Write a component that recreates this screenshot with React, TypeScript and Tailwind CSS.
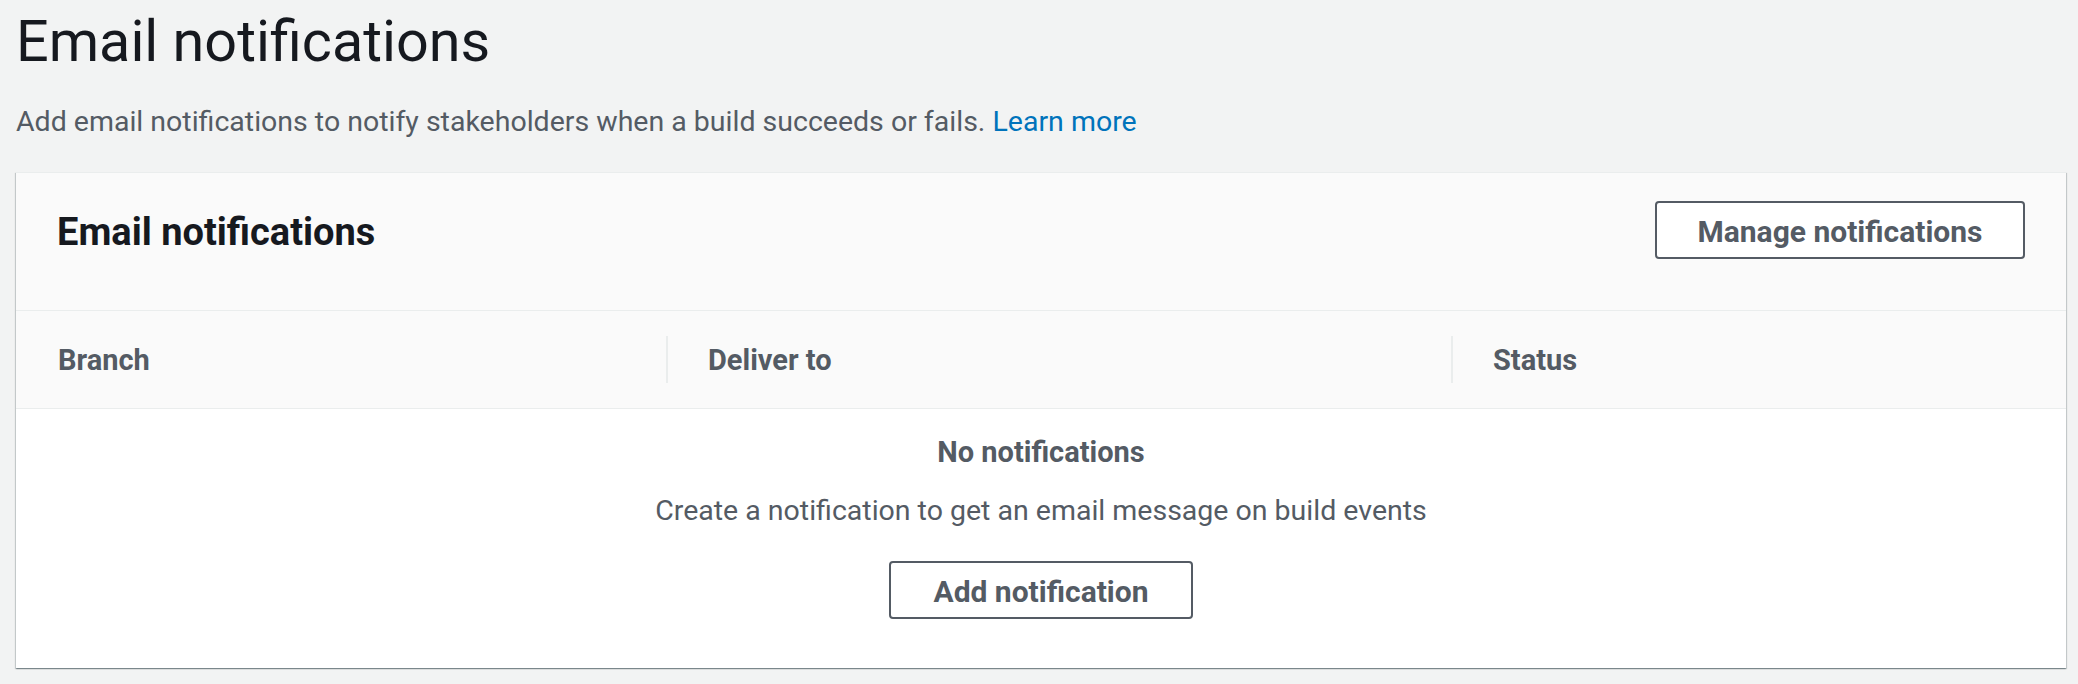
const font = { fontFamily: "Roboto, 'Liberation Sans', sans-serif" };

function OutlineButton({ label, width }: { label: string; width: string }) {
  return (
    <button
      className={`${width} h-[58px] rounded-[4px] border-2 border-[#545b64] bg-white pt-[3px] text-[30px] font-bold leading-none text-[#545b64]`}
    >
      {label}
    </button>
  );
}

function App() {
  const columns = ["Branch", "Deliver to", "Status"];

  return (
    <div className="h-[684px] w-full bg-[#f2f3f3] pl-[16px] pr-[12px]" style={font}>
      <h1 className="pt-[7px] text-[57.5px] font-normal leading-[70px] text-[#16191f]">Email notifications</h1>
      <p className="mt-[27px] text-[28.5px] leading-[36px] text-[#545b64]">
        Add email notifications to notify stakeholders when a build succeeds or fails.{" "}
        <a className="text-[#0073bb]" href="#">Learn more</a>
      </p>

      <div className="mt-[32px] border-t border-[#eaeded] bg-white shadow-[0_1px_1px_0_rgba(0,28,36,0.3),1px_1px_1px_0_rgba(0,28,36,0.15),-1px_1px_1px_0_rgba(0,28,36,0.15)]">
        <div className="h-[138px] border-b border-[#eaeded] bg-[#fafafa] px-[41px] pt-[28px]">
          <div className="flex h-[58px] items-center justify-between">
            <h2 className="pt-[4px] text-[38px] font-bold leading-[44px] text-[#16191f]">Email notifications</h2>
            <OutlineButton label="Manage notifications" width="w-[370px]" />
          </div>
        </div>

        <div className="grid h-[98px] grid-cols-[650px_785px_1fr] border-b border-[#eaeded] bg-[#fafafa]">
          {columns.map((col, i) => (
            <div key={col} className="flex items-center">
              {i > 0 && <div className="h-[47px] w-[2px] bg-[#eaeded]" />}
              <span className={`${i === 0 ? "pl-[42px]" : "pl-[40px]"} text-[29px] font-bold leading-[36px] text-[#545b64]`}>
                {col}
              </span>
            </div>
          ))}
        </div>

        <div className="flex h-[259px] flex-col items-center pt-[25px] text-[#545b64]">
          <p className="text-[29px] font-bold leading-[36px]">No notifications</p>
          <p className="mt-[23px] text-[28.5px] leading-[36px]">
            Create a notification to get an email message on build events
          </p>
          <div className="mt-[32px]">
            <OutlineButton label="Add notification" width="w-[304px]" />
          </div>
        </div>
      </div>
    </div>
  );
}

export default App
